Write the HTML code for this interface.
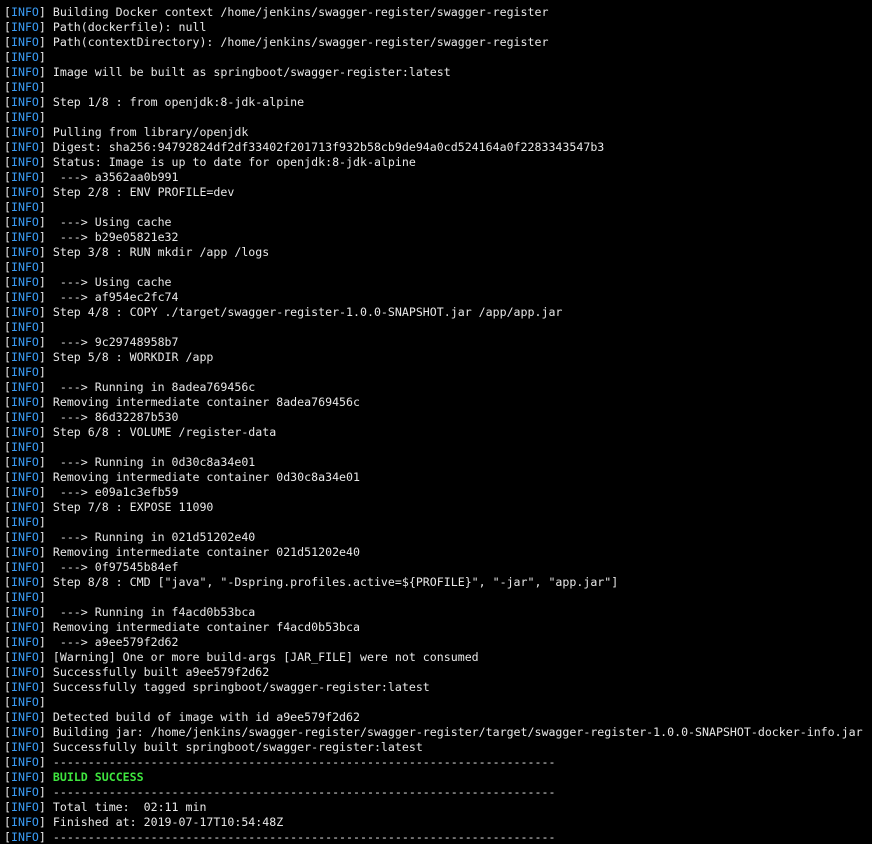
<!DOCTYPE html>
<html><head><meta charset="utf-8"><style>
html,body{margin:0;padding:0;background:#000;width:872px;height:844px;overflow:hidden}
pre{margin:0;padding:5px 0 0 4px;font-family:"DejaVu Sans Mono","Liberation Mono",monospace;font-size:11.6px;line-height:15px;color:#e8e8e8;white-space:pre}
b{font-weight:normal;color:#3b9cf5}
.g{color:#3fe63f;font-weight:bold}
</style></head><body><pre>[<b>INFO</b>] Building Docker context /home/jenkins/swagger-register/swagger-register
[<b>INFO</b>] Path(dockerfile): null
[<b>INFO</b>] Path(contextDirectory): /home/jenkins/swagger-register/swagger-register
[<b>INFO</b>]
[<b>INFO</b>] Image will be built as springboot/swagger-register:latest
[<b>INFO</b>]
[<b>INFO</b>] Step 1/8 : from openjdk:8-jdk-alpine
[<b>INFO</b>]
[<b>INFO</b>] Pulling from library/openjdk
[<b>INFO</b>] Digest: sha256:94792824df2df33402f201713f932b58cb9de94a0cd524164a0f2283343547b3
[<b>INFO</b>] Status: Image is up to date for openjdk:8-jdk-alpine
[<b>INFO</b>]  ---&gt; a3562aa0b991
[<b>INFO</b>] Step 2/8 : ENV PROFILE=dev
[<b>INFO</b>]
[<b>INFO</b>]  ---&gt; Using cache
[<b>INFO</b>]  ---&gt; b29e05821e32
[<b>INFO</b>] Step 3/8 : RUN mkdir /app /logs
[<b>INFO</b>]
[<b>INFO</b>]  ---&gt; Using cache
[<b>INFO</b>]  ---&gt; af954ec2fc74
[<b>INFO</b>] Step 4/8 : COPY ./target/swagger-register-1.0.0-SNAPSHOT.jar /app/app.jar
[<b>INFO</b>]
[<b>INFO</b>]  ---&gt; 9c29748958b7
[<b>INFO</b>] Step 5/8 : WORKDIR /app
[<b>INFO</b>]
[<b>INFO</b>]  ---&gt; Running in 8adea769456c
[<b>INFO</b>] Removing intermediate container 8adea769456c
[<b>INFO</b>]  ---&gt; 86d32287b530
[<b>INFO</b>] Step 6/8 : VOLUME /register-data
[<b>INFO</b>]
[<b>INFO</b>]  ---&gt; Running in 0d30c8a34e01
[<b>INFO</b>] Removing intermediate container 0d30c8a34e01
[<b>INFO</b>]  ---&gt; e09a1c3efb59
[<b>INFO</b>] Step 7/8 : EXPOSE 11090
[<b>INFO</b>]
[<b>INFO</b>]  ---&gt; Running in 021d51202e40
[<b>INFO</b>] Removing intermediate container 021d51202e40
[<b>INFO</b>]  ---&gt; 0f97545b84ef
[<b>INFO</b>] Step 8/8 : CMD ["java", "-Dspring.profiles.active=${PROFILE}", "-jar", "app.jar"]
[<b>INFO</b>]
[<b>INFO</b>]  ---&gt; Running in f4acd0b53bca
[<b>INFO</b>] Removing intermediate container f4acd0b53bca
[<b>INFO</b>]  ---&gt; a9ee579f2d62
[<b>INFO</b>] [Warning] One or more build-args [JAR_FILE] were not consumed
[<b>INFO</b>] Successfully built a9ee579f2d62
[<b>INFO</b>] Successfully tagged springboot/swagger-register:latest
[<b>INFO</b>]
[<b>INFO</b>] Detected build of image with id a9ee579f2d62
[<b>INFO</b>] Building jar: /home/jenkins/swagger-register/swagger-register/target/swagger-register-1.0.0-SNAPSHOT-docker-info.jar
[<b>INFO</b>] Successfully built springboot/swagger-register:latest
[<b>INFO</b>] ------------------------------------------------------------------------
[<b>INFO</b>] <span class="g">BUILD SUCCESS</span>
[<b>INFO</b>] ------------------------------------------------------------------------
[<b>INFO</b>] Total time:  02:11 min
[<b>INFO</b>] Finished at: 2019-07-17T10:54:48Z
[<b>INFO</b>] ------------------------------------------------------------------------</pre></body></html>
